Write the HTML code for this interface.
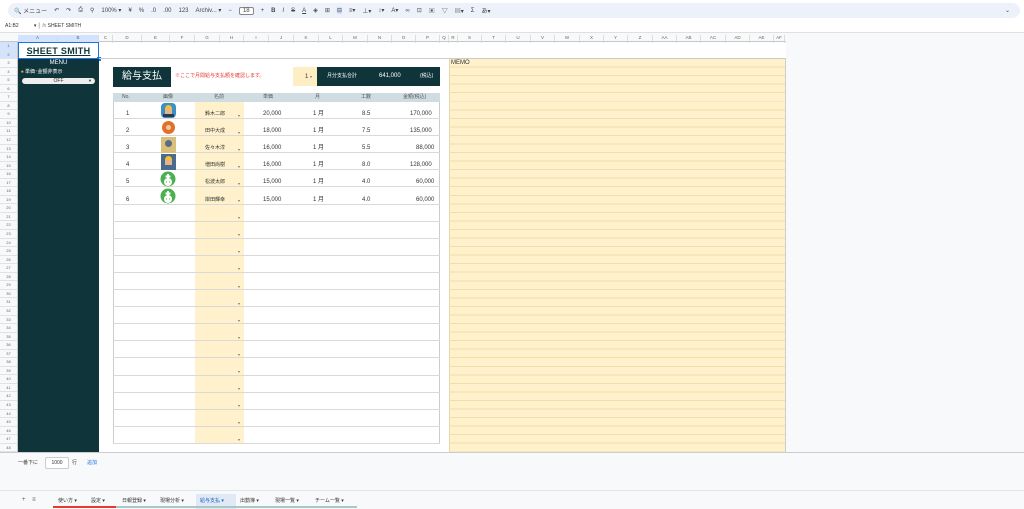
<!DOCTYPE html>
<html><head><meta charset="utf-8"><style>
*{box-sizing:border-box;margin:0;padding:0}
body{width:1024px;height:509px;overflow:hidden;background:#fff;font-family:"Liberation Sans","Noto Sans CJK JP",sans-serif;position:relative;color:#333}
.a{position:absolute}
.tb{left:8px;top:3px;width:1012px;height:15px;background:#edf2fa;border-radius:8px;font-size:6px;color:#444;display:flex;align-items:center;gap:7px;padding-left:6px;white-space:nowrap}
.ch{top:33px;height:9px;background:#f8f9fa;border-bottom:1px solid #c7c7c7;font-size:4.5px;color:#666}
.ch span{position:absolute;top:2px;text-align:center;border-right:1px solid #dcdcdc;height:8px}
.rh{left:0;width:18px;font-size:4px;color:#666;background:#f8f9fa;border-right:1px solid #c7c7c7}
.rh div{height:8.55px;line-height:8.55px;text-align:center;border-bottom:1px solid #e2e2e2}
.dark{background:#0f353b}
.row{position:absolute;left:113px;width:327px;height:17.1px;border-bottom:1px solid #d9d9d9}
.row span{position:absolute;top:9px;font-size:6px;line-height:7px;color:#333;white-space:nowrap}
.arr{position:absolute;left:238px;font-size:4px;color:#777}
</style></head><body>
<div class="a tb">
<span>🔍 メニュー</span><span>↶</span><span>↷</span><span>⎙</span><span>⚲</span><span>100% ▾</span><span>¥</span><span>%</span><span>.0</span><span>.00</span><span>123</span><span>Archiv... ▾</span><span>−</span><span style="border:1px solid #888;border-radius:2px;padding:0 3px;background:#fff">18</span><span>+</span><b>B</b><i>I</i><s>S</s><u>A</u><span>◈</span><span>⊞</span><span style="background:#d3e3fd">⊟</span><span>≡▾</span><span>⊥▾</span><span>↕▾</span><span>A▾</span><span>∞</span><span>⊡</span><span>▣</span><span>▽</span><span>▤▾</span><span>Σ</span><span>あ▾</span>
<span style="position:absolute;right:10px">⌄</span></div>
<div class="a" style="left:5px;top:23px;font-size:5px;color:#333;white-space:pre">A1:B2           ▾ │ <i style="color:#888">fx</i> SHEET SMITH</div>
<div class="a" style="left:0;top:32px;width:1024px;height:1px;background:#e0e0e0"></div>
<div class="a ch" style="left:0;width:1024px">
<span style="left:18px;width:40px;background:#d3e3fd">A</span><span style="left:58px;width:41px;background:#d3e3fd">B</span><span style="left:99px;width:14px">C</span><span style="left:113px;width:29px">D</span><span style="left:142px;width:28px">E</span><span style="left:170px;width:25px">F</span><span style="left:195px;width:25px">G</span><span style="left:220px;width:24px">H</span><span style="left:244px;width:25px">I</span><span style="left:269px;width:25px">J</span><span style="left:294px;width:25px">K</span><span style="left:319px;width:24px">L</span><span style="left:343px;width:25px">M</span><span style="left:368px;width:24px">N</span><span style="left:392px;width:24px">O</span><span style="left:416px;width:24px">P</span><span style="left:440px;width:9px">Q</span><span style="left:449px;width:9px">R</span><span style="left:458px;width:24px">S</span><span style="left:482px;width:24px">T</span><span style="left:506px;width:25px">U</span><span style="left:531px;width:24px">V</span><span style="left:555px;width:25px">W</span><span style="left:580px;width:24px">X</span><span style="left:604px;width:24px">Y</span><span style="left:628px;width:25px">Z</span><span style="left:653px;width:24px">AA</span><span style="left:677px;width:24px">AB</span><span style="left:701px;width:25px">AC</span><span style="left:726px;width:24px">AD</span><span style="left:750px;width:24px">AE</span><span style="left:774px;width:11px">AF</span>
</div>
<div class="a" style="left:786px;top:33px;width:238px;height:420px;background:#f8f9fa"></div>
<div class="a rh" style="top:42px;height:411px">
<div style="background:#d3e3fd">1</div><div style="background:#d3e3fd">2</div><div>3</div><div>4</div><div>5</div><div>6</div><div>7</div><div>8</div><div>9</div><div>10</div><div>11</div><div>12</div><div>13</div><div>14</div><div>15</div><div>16</div><div>17</div><div>18</div><div>19</div><div>20</div><div>21</div><div>22</div><div>23</div><div>24</div><div>25</div><div>26</div><div>27</div><div>28</div><div>29</div><div>30</div><div>31</div><div>32</div><div>33</div><div>34</div><div>35</div><div>36</div><div>37</div><div>38</div><div>39</div><div>40</div><div>41</div><div>42</div><div>43</div><div>44</div><div>45</div><div>46</div><div>47</div><div>48</div>
</div>
<div class="a" style="left:18px;top:42px;width:81px;height:17px;border:1px solid #1a73e8;text-align:center;font-weight:bold;font-size:9px;letter-spacing:0.3px;line-height:17px;color:#0f353b;text-decoration:underline">SHEET SMITH</div>
<div class="a" style="left:97px;top:57px;width:4px;height:4px;background:#1a73e8"></div>
<div class="a" style="left:99px;top:58px;width:687px;height:1px;background:#ccc"></div>
<div class="a dark" style="left:18px;top:59px;width:81px;height:393px"></div>
<div class="a" style="left:18px;top:60px;width:81px;text-align:center;font-size:6px;line-height:7px;color:#fff">MENU</div>
<div class="a" style="left:21px;top:69px;font-size:5px;line-height:6px;color:#fff"><span style="color:#f4a93c">♠</span> 単価･金額非表示</div>
<div class="a" style="left:22px;top:78px;width:73px;height:6px;background:#eee;border-radius:3px;font-size:5px;line-height:6px;text-align:center;color:#333">OFF<span style="position:absolute;right:3px;font-size:4px">▼</span></div>
<div class="a" style="left:449px;top:59px;width:337px;height:393px;background:#fef1cc repeating-linear-gradient(to bottom,transparent 0,transparent 7.55px,#f4ddaa 7.55px,#f4ddaa 8.55px);border-left:1px solid #e6d7ad;border-right:1px solid #ccc"></div>
<div class="a" style="left:451px;top:60px;font-size:6px;line-height:7px;color:#333">MEMO</div>
<div class="a dark" style="left:113px;top:67px;width:58px;height:20px;color:#fff;font-size:10px;line-height:20px;text-align:center">給与支払</div>
<div class="a" style="left:175px;top:73px;font-size:5px;line-height:6px;color:#e53935">※ここで月間給与支払額を確認します。</div>
<div class="a" style="left:293px;top:67px;width:24px;height:19px;background:#fdeec4;font-size:6px;line-height:19px;color:#333;padding-left:12px;white-space:nowrap">1 <span style="font-size:4px;color:#777">▾</span></div>
<div class="a dark" style="left:317px;top:67px;width:123px;height:19px;color:#fff;font-size:5px;line-height:19px;white-space:nowrap"><span style="position:absolute;left:10px">月分支払合計</span><span style="position:absolute;left:62px;font-size:6px">641,000</span><span style="position:absolute;left:103px">(税込)</span></div>
<div class="a" style="left:113px;top:93px;width:327px;height:351px;border:1px solid #ccc;border-top:none"></div>
<div class="a" style="left:195px;top:102px;width:49px;height:342px;background:#fef1cc"></div>
<div class="a" style="left:113px;top:93px;width:327px;height:9px;background:#cfdde3;font-size:5px;line-height:7px;color:#555;white-space:nowrap">
<span class="a" style="left:9px;top:1px">No.</span><span class="a" style="left:50px;top:1px">画像</span><span class="a" style="left:101px;top:1px">名前</span><span class="a" style="left:150px;top:1px">単価</span><span class="a" style="left:202px;top:1px">月</span><span class="a" style="left:248px;top:1px">工数</span><span class="a" style="left:290px;top:1px">金額(税込)</span></div>
<div class="row" style="top:102px"><span style="left:13px">1</span><span style="left:92px;font-size:5px">鈴木二郎</span><span style="left:150px">20,000</span><span style="left:200px">1 月</span><span style="left:249px">8.5</span><span style="left:297px">170,000</span></div>
<div class="row" style="top:119.1px"><span style="left:13px">2</span><span style="left:92px;font-size:5px">田中大成</span><span style="left:150px">18,000</span><span style="left:200px">1 月</span><span style="left:249px">7.5</span><span style="left:297px">135,000</span></div>
<div class="row" style="top:136.2px"><span style="left:13px">3</span><span style="left:92px;font-size:5px">佐々木淳</span><span style="left:150px">16,000</span><span style="left:200px">1 月</span><span style="left:249px">5.5</span><span style="left:303px">88,000</span></div>
<div class="row" style="top:153.3px"><span style="left:13px">4</span><span style="left:92px;font-size:5px">増田尚樹</span><span style="left:150px">16,000</span><span style="left:200px">1 月</span><span style="left:249px">8.0</span><span style="left:297px">128,000</span></div>
<div class="row" style="top:170.4px"><span style="left:13px">5</span><span style="left:92px;font-size:5px">松波太郎</span><span style="left:150px">15,000</span><span style="left:200px">1 月</span><span style="left:249px">4.0</span><span style="left:303px">60,000</span></div>
<div class="row" style="top:187.5px"><span style="left:13px">6</span><span style="left:92px;font-size:5px">岸田輝幸</span><span style="left:150px">15,000</span><span style="left:200px">1 月</span><span style="left:249px">4.0</span><span style="left:303px">60,000</span></div>
<div class="row" style="top:204.6px"></div><div class="row" style="top:221.7px"></div><div class="row" style="top:238.8px"></div><div class="row" style="top:255.9px"></div><div class="row" style="top:273px"></div><div class="row" style="top:290.1px"></div><div class="row" style="top:307.2px"></div><div class="row" style="top:324.3px"></div><div class="row" style="top:341.4px"></div><div class="row" style="top:358.5px"></div><div class="row" style="top:375.6px"></div><div class="row" style="top:392.7px"></div><div class="row" style="top:409.8px"></div><div class="row" style="top:426.9px"></div>
<div class="arr" style="top:113px">▾</div><div class="arr" style="top:130px">▾</div><div class="arr" style="top:147px">▾</div><div class="arr" style="top:164px">▾</div><div class="arr" style="top:181px">▾</div><div class="arr" style="top:198px">▾</div><div class="arr" style="top:215px">▾</div><div class="arr" style="top:232px">▾</div><div class="arr" style="top:249px">▾</div><div class="arr" style="top:266px">▾</div><div class="arr" style="top:284px">▾</div><div class="arr" style="top:301px">▾</div><div class="arr" style="top:318px">▾</div><div class="arr" style="top:335px">▾</div><div class="arr" style="top:352px">▾</div><div class="arr" style="top:369px">▾</div><div class="arr" style="top:386px">▾</div><div class="arr" style="top:403px">▾</div><div class="arr" style="top:420px">▾</div><div class="arr" style="top:437px">▾</div>
<div class="a" style="left:161px;top:103px;width:15px;height:15px;border-radius:4px;background:#3d8fc4"><div class="a" style="left:4px;top:2px;width:7px;height:4px;background:#f2c230;border-radius:4px 4px 0 0"></div><div class="a" style="left:4px;top:6px;width:7px;height:5px;background:#e7b48a"></div><div class="a" style="left:2px;top:11px;width:11px;height:3px;background:#2a3a4a"></div></div>
<div class="a" style="left:162px;top:121px;width:13px;height:13px;border-radius:50%;background:#e0702a"><div class="a" style="left:4px;top:4px;width:5px;height:5px;background:#f1c9a0;border-radius:50%"></div></div>
<div class="a" style="left:161px;top:137px;width:15px;height:16px;background:#d8c07a"><div class="a" style="left:4px;top:3px;width:7px;height:7px;background:#5a6a8a;border-radius:50%"></div></div>
<div class="a" style="left:161px;top:154px;width:15px;height:16px;background:#4a6a8e"><div class="a" style="left:4px;top:2px;width:7px;height:4px;background:#f2c230;border-radius:4px 4px 0 0"></div><div class="a" style="left:4px;top:6px;width:7px;height:5px;background:#e7b48a"></div></div>
<svg class="a" style="left:160px;top:171px" width="16" height="16" viewBox="0 0 16 16"><circle cx="8" cy="8" r="7.5" fill="#4caf50"/><circle cx="8" cy="11" r="4" fill="#fff"/><path d="M7 3h2v1.5h1.5v2H9V8H7V6.5H5.5v-2H7z" fill="#fff"/><rect x="6" y="10.5" width="1" height="1" fill="#4caf50"/><rect x="9" y="10.5" width="1" height="1" fill="#4caf50"/></svg>
<svg class="a" style="left:160px;top:188px" width="16" height="16" viewBox="0 0 16 16"><circle cx="8" cy="8" r="7.5" fill="#4caf50"/><circle cx="8" cy="11" r="4" fill="#fff"/><path d="M7 3h2v1.5h1.5v2H9V8H7V6.5H5.5v-2H7z" fill="#fff"/><rect x="6" y="10.5" width="1" height="1" fill="#4caf50"/><rect x="9" y="10.5" width="1" height="1" fill="#4caf50"/></svg>
<div class="a" style="left:0;top:452px;width:1024px;height:1px;background:#ccc"></div>
<div class="a" style="left:0;top:453px;width:1024px;height:37px;background:#f8f9fa"></div>
<div class="a" style="left:18px;top:460px;font-size:5px;line-height:6px;color:#333">一番下に</div>
<div class="a" style="left:45px;top:457px;width:24px;height:12px;border:1px solid #ccc;border-radius:2px;background:#fff;font-size:5px;line-height:10px;text-align:center">1000</div>
<div class="a" style="left:72px;top:460px;font-size:5px;line-height:6px">行</div>
<div class="a" style="left:87px;top:460px;font-size:5px;line-height:6px;color:#1a73e8">追加</div>
<div class="a" style="left:0;top:490px;width:1024px;height:19px;background:#f8f9fa;border-top:1px solid #e5e5e5"></div>
<div class="a" style="left:22px;top:497px;font-size:6px;line-height:7px;color:#555;white-space:pre">+    ≡</div>
<div class="a" style="left:196px;top:494px;width:40px;height:15px;background:#e1e9f7"></div>
<div class="a" style="left:53px;top:506px;width:63px;height:2px;background:#e53935"></div>
<div class="a" style="left:116px;top:506px;width:241px;height:2px;background:#a8c7c7"></div>
<div class="a" style="top:498px;left:58px;font-size:5px;line-height:6px;color:#333;white-space:nowrap">使い方 ▾</div>
<div class="a" style="top:498px;left:91px;font-size:5px;line-height:6px;color:#333;white-space:nowrap">設定 ▾</div>
<div class="a" style="top:498px;left:122px;font-size:5px;line-height:6px;color:#333;white-space:nowrap">日報登録 ▾</div>
<div class="a" style="top:498px;left:160px;font-size:5px;line-height:6px;color:#333;white-space:nowrap">現場分析 ▾</div>
<div class="a" style="top:498px;left:200px;font-size:5px;line-height:6px;color:#1a5fc0;white-space:nowrap">給与支払 ▾</div>
<div class="a" style="top:498px;left:240px;font-size:5px;line-height:6px;color:#333;white-space:nowrap">出勤簿 ▾</div>
<div class="a" style="top:498px;left:275px;font-size:5px;line-height:6px;color:#333;white-space:nowrap">現場一覧 ▾</div>
<div class="a" style="top:498px;left:315px;font-size:5px;line-height:6px;color:#333;white-space:nowrap">チーム一覧 ▾</div>
</body></html>
